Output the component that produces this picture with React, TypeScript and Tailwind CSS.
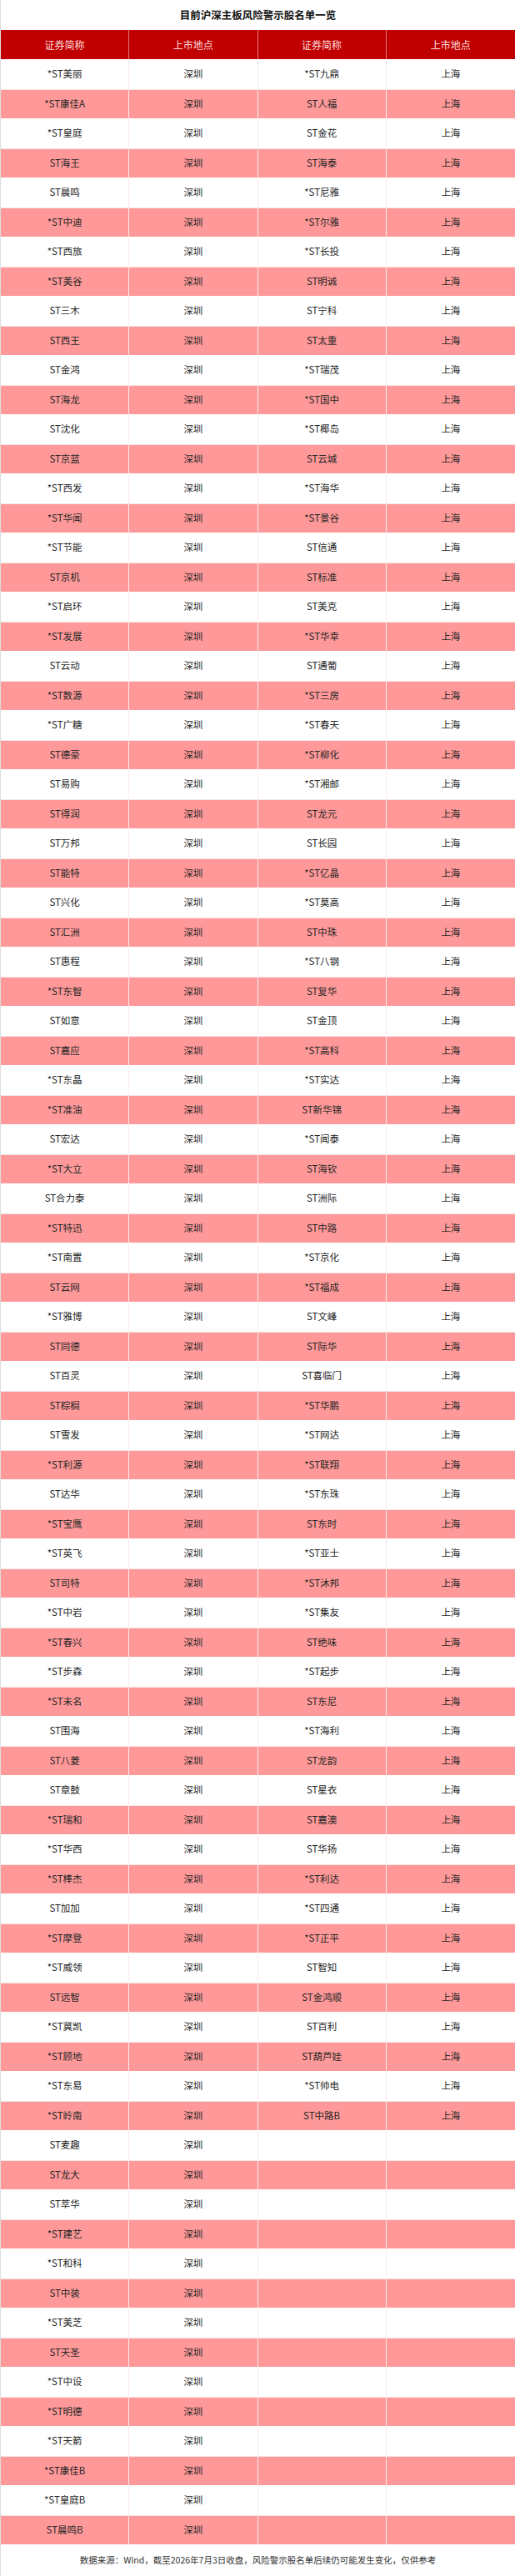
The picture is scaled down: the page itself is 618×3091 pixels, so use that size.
import React from "react";

const rows: [string, string][] = [
  ["*ST美丽", "*ST九鼎"],
  ["*ST康佳A", "ST人福"],
  ["*ST皇庭", "ST金花"],
  ["ST海王", "ST海泰"],
  ["ST晨鸣", "*ST尼雅"],
  ["*ST中迪", "*ST尔雅"],
  ["*ST西旅", "*ST长投"],
  ["*ST美谷", "ST明诚"],
  ["ST三木", "ST宁科"],
  ["ST西王", "ST太重"],
  ["ST金鸿", "*ST瑞茂"],
  ["ST海龙", "*ST国中"],
  ["ST沈化", "*ST椰岛"],
  ["ST京蓝", "ST云城"],
  ["*ST西发", "*ST海华"],
  ["*ST华闻", "*ST景谷"],
  ["*ST节能", "ST信通"],
  ["ST京机", "ST标准"],
  ["*ST启环", "ST美克"],
  ["*ST发展", "*ST华幸"],
  ["ST云动", "ST通葡"],
  ["*ST数源", "*ST三房"],
  ["*ST广糖", "*ST春天"],
  ["ST德豪", "*ST柳化"],
  ["ST易购", "*ST湘邮"],
  ["ST得润", "ST龙元"],
  ["ST万邦", "ST长园"],
  ["ST能特", "*ST亿晶"],
  ["ST兴化", "*ST莫高"],
  ["ST汇洲", "ST中珠"],
  ["ST惠程", "*ST八钢"],
  ["*ST东智", "ST复华"],
  ["ST如意", "ST金顶"],
  ["ST嘉应", "*ST高科"],
  ["*ST东晶", "*ST实达"],
  ["*ST准油", "ST新华锦"],
  ["ST宏达", "*ST闻泰"],
  ["*ST大立", "ST海钦"],
  ["ST合力泰", "ST洲际"],
  ["*ST特迅", "ST中路"],
  ["*ST南置", "*ST京化"],
  ["ST云网", "*ST福成"],
  ["*ST雅博", "ST文峰"],
  ["ST同德", "ST际华"],
  ["ST百灵", "ST喜临门"],
  ["ST棕榈", "*ST华鹏"],
  ["ST雪发", "*ST网达"],
  ["*ST利源", "*ST联翔"],
  ["ST达华", "*ST东珠"],
  ["*ST宝鹰", "ST东时"],
  ["*ST英飞", "*ST亚士"],
  ["ST司特", "*ST沐邦"],
  ["*ST中岩", "*ST集友"],
  ["*ST春兴", "ST绝味"],
  ["*ST步森", "*ST起步"],
  ["*ST未名", "ST东尼"],
  ["ST围海", "*ST海利"],
  ["ST八菱", "ST龙韵"],
  ["ST章鼓", "ST星衣"],
  ["*ST瑞和", "ST嘉澳"],
  ["*ST华西", "ST华扬"],
  ["*ST棒杰", "*ST利达"],
  ["ST加加", "*ST四通"],
  ["*ST摩登", "*ST正平"],
  ["*ST威领", "ST智知"],
  ["ST远智", "ST金鸿顺"],
  ["*ST冀凯", "ST百利"],
  ["*ST顾地", "ST葫芦娃"],
  ["*ST东易", "*ST帅电"],
  ["*ST岭南", "ST中路B"],
  ["ST麦趣", ""],
  ["ST龙大", ""],
  ["ST萃华", ""],
  ["*ST建艺", ""],
  ["*ST和科", ""],
  ["ST中装", ""],
  ["*ST美芝", ""],
  ["ST天圣", ""],
  ["*ST中设", ""],
  ["*ST明德", ""],
  ["*ST天箭", ""],
  ["*ST康佳B", ""],
  ["*ST皇庭B", ""],
  ["ST晨鸣B", ""],
];

export default function App() {
  return (
    <div
      className="w-[618px] bg-white border-l border-[#dcdcdc] text-[#262626]"
      style={{ fontFamily: '"Noto Sans CJK SC", "Noto Sans", sans-serif' }}
    >
      <div className="h-[36px] flex items-center justify-center text-[12.5px] font-bold text-[#111]">
        目前沪深主板风险警示股名单一览
      </div>
      <div className="grid grid-cols-4 h-[35px] bg-[#c00000] text-[12px] text-[#ffdede]">
        {["证券简称", "上市地点", "证券简称", "上市地点"].map((h, i) => (
          <div
            key={i}
            className={`flex items-center justify-center ${i < 3 ? "border-r border-[#e07a7a]" : ""}`}
          >
            {h}
          </div>
        ))}
      </div>
      {rows.map(([l, r], idx) => {
        const pink = idx % 2 === 1;
        const cells = [l, "深圳", r, r ? "上海" : ""];
        return (
          <div
            key={idx}
            className={`grid grid-cols-4 h-[35.5px] text-[11.5px] ${pink ? "bg-[#ff9999] border-t border-[#f4e6e6]" : "bg-white"}`}
          >
            {cells.map((c, i) => (
              <div
                key={i}
                className={`flex items-center justify-center ${i < 3 ? "border-r border-[#fbeaea]" : ""}`}
              >
                {c}
              </div>
            ))}
          </div>
        );
      })}
      <div className="h-[38px] flex items-center justify-center text-[10.5px] text-[#333]">
        数据来源：Wind，截至2026年7月3日收盘，风险警示股名单后续仍可能发生变化，仅供参考
      </div>
    </div>
  );
}
